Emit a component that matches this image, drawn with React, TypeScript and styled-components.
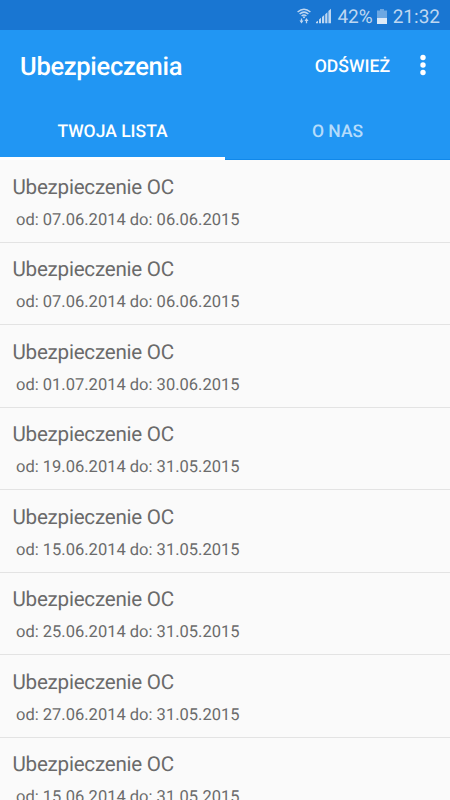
import React from 'react';
import styled, { createGlobalStyle } from 'styled-components';

const GlobalStyle = createGlobalStyle`
  * { box-sizing: border-box; }
  body {
    margin: 0; overflow: hidden; font-family: Roboto, sans-serif; background: #fafafa;
    text-rendering: geometricPrecision;
  }
`;
const Screen = styled.div`
  width: 450px; height: 800px; overflow: hidden; display: flex; flex-direction: column; background: #fafafa;
`;
const StatusBar = styled.div`
  height: 30px; flex: none; background: #1976d2; color: #bfd7f1;
  display: flex; align-items: center; justify-content: flex-end;
  padding: 2px 10px 0 0; font-size: 19px;
`;
const WifiIcon = styled.svg`margin-right: 5px;`;
const SignalIcon = styled.svg`margin-right: 5px;`;
const BatteryIcon = styled.svg`margin: 0 6px 0 4px;`;
const AppBar = styled.header`
  height: 72px; flex: none; background: #2196f3; color: #fff;
  display: flex; align-items: center; padding: 0 24.5px 0 20px;
`;
const Title = styled.h1`
  margin: 2px 0 0; flex: 1; font-size: 25.5px; font-weight: 500; line-height: 30px; letter-spacing: -0.3px;
`;
const Action = styled.button`
  border: 0; padding: 2px 0 0; background: none; color: #fff; font: 500 17.6px Roboto, sans-serif; margin-right: 29.5px;
  text-rendering: geometricPrecision;
`;
const OverflowIcon = styled.svg`margin-top: -2px;`;
const Tabs = styled.nav`height: 58px; flex: none; display: flex; background: #2196f3;`;
const Tab = styled.div<{ $active?: boolean }>`
  flex: 1; display: flex; justify-content: center; padding-top: 19px; line-height: 22px;
  font-size: 17.5px; font-weight: 500;
  color: ${p => (p.$active ? '#fff' : '#b5dcfb')};
  border-bottom: ${p => (p.$active ? '3px solid #fff' : '1px solid #1088ea')};
`;
const List = styled.ul`margin: 0; padding: 0; list-style: none;`;
const Row = styled.li`height: 82.5px; padding: 13.5px 12.5px 0; border-bottom: 1px solid #e3e3e3;`;
const Name = styled.div`font-size: 20.6px; line-height: 28px; color: #6a6a6a; letter-spacing: -0.24px;`;
const Dates = styled.div`font-size: 16.5px; line-height: 22px; color: #6b6b6b; margin: 8px 0 0 3.5px;`;

const dates = [
  ['07.06.2014', '06.06.2015'], ['07.06.2014', '06.06.2015'], ['01.07.2014', '30.06.2015'],
  ['19.06.2014', '31.05.2015'], ['15.06.2014', '31.05.2015'], ['25.06.2014', '31.05.2015'],
  ['27.06.2014', '31.05.2015'], ['15.06.2014', '31.05.2015'],
];

export default function App() {
  return (
    <Screen>
      <GlobalStyle />
      <StatusBar>
        <WifiIcon width="14" height="16" viewBox="0 0 14 16" fill="none" stroke="#bfd7f1" strokeWidth="1.5">
          <path d="M0.6 4Q7-1.6 13.4 4M2.6 6Q7 2.2 11.4 6M4.6 8Q7 6 9.4 8" />
          <circle cx="7" cy="9.3" r="1" fill="#bfd7f1" stroke="none" />
          <path d="M4.5 10.5v2.5M9.5 12.5v2.8" strokeWidth="1.3" />
          <path d="M2.5 12.5h4l-2 3zM7.5 13h4l-2-3z" fill="#bfd7f1" stroke="none" />
        </WifiIcon>
        <SignalIcon width="16" height="16" viewBox="0 0 16 16" fill="#bfd7f1">
          <path d="M0 15.3v-1.2l2-1.4v2.6zM3 15.3v-3.7l2-1.8v5.5zM6 15.3V9l2.2-2v8.3zM9.2 15.3V6.2l2.2-2v11.1zM12.4 15.3V3.1L15 .8v14.5z" />
        </SignalIcon>
        <span>42%</span>
        <BatteryIcon width="10" height="15" viewBox="0 0 10 15" fill="#bfd7f1">
          <path d="M3 0h4v1.5h3V9H0V1.5h3z" opacity=".5" /><path d="M0 9h10v6H0z" fill="#dce9f7" />
        </BatteryIcon>
        <span>21:32</span>
      </StatusBar>
      <AppBar>
        <Title>Ubezpieczenia</Title>
        <Action>ODŚWIEŻ</Action>
        <OverflowIcon width="6" height="22" viewBox="0 0 6 22" fill="#fff">
          <circle cx="3" cy="3.5" r="2.7" /><circle cx="3" cy="11" r="2.7" /><circle cx="3" cy="18.5" r="2.7" />
        </OverflowIcon>
      </AppBar>
      <Tabs><Tab $active>TWOJA LISTA</Tab><Tab>O NAS</Tab></Tabs>
      <List>
        {dates.map(([from, to], i) => (
          <Row key={i}><Name>Ubezpieczenie OC</Name><Dates>od: {from} do: {to}</Dates></Row>
        ))}
      </List>
    </Screen>
  );
}
